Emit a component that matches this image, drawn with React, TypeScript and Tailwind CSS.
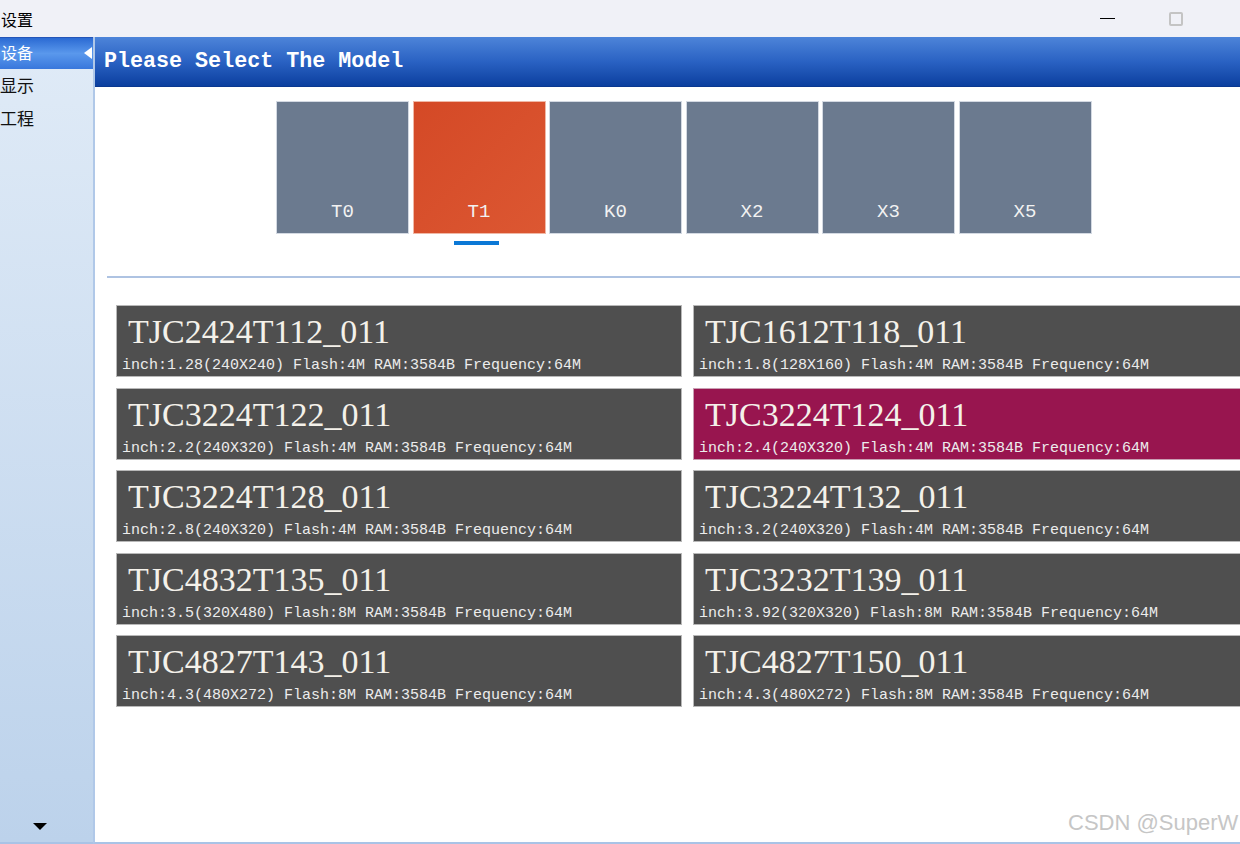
const TILES = ["T0", "T1", "K0", "X2", "X3", "X5"];

type Model = { name: string; spec: string };

const MODELS: Model[] = [
  { name: "TJC2424T112_011", spec: "inch:1.28(240X240) Flash:4M RAM:3584B Frequency:64M" },
  { name: "TJC1612T118_011", spec: "inch:1.8(128X160) Flash:4M RAM:3584B Frequency:64M" },
  { name: "TJC3224T122_011", spec: "inch:2.2(240X320) Flash:4M RAM:3584B Frequency:64M" },
  { name: "TJC3224T124_011", spec: "inch:2.4(240X320) Flash:4M RAM:3584B Frequency:64M" },
  { name: "TJC3224T128_011", spec: "inch:2.8(240X320) Flash:4M RAM:3584B Frequency:64M" },
  { name: "TJC3224T132_011", spec: "inch:3.2(240X320) Flash:4M RAM:3584B Frequency:64M" },
  { name: "TJC4832T135_011", spec: "inch:3.5(320X480) Flash:8M RAM:3584B Frequency:64M" },
  { name: "TJC3232T139_011", spec: "inch:3.92(320X320) Flash:8M RAM:3584B Frequency:64M" },
  { name: "TJC4827T143_011", spec: "inch:4.3(480X272) Flash:8M RAM:3584B Frequency:64M" },
  { name: "TJC4827T150_011", spec: "inch:4.3(480X272) Flash:8M RAM:3584B Frequency:64M" },
];

const SELECTED_TILE = "T1";
const SELECTED_MODEL = "TJC3224T124_011";

export default function App() {
  return (
    <div className="relative w-[1240px] h-[844px] overflow-hidden bg-[#f0f1f7] font-['Noto_Sans_CJK_SC',sans-serif]">
      {/* Title bar */}
      <div className="h-[37px] flex items-center bg-[#f0f1f7]">
        <span className="ml-[1px] text-[16px] leading-none text-black">设置</span>
        <div className="flex-1" />
        <div className="w-[15px] h-px bg-black mr-[54px]" />
        <div className="w-[14px] h-[14px] border-2 border-[#c4c4c4] rounded-[2px] mr-[57px]" />
      </div>

      <div className="flex h-[807px]">
        {/* Sidebar */}
        <div className="relative w-[93px] shrink-0 flex flex-col bg-gradient-to-b from-[#e0ebf7] to-[#bcd2eb] border-b-2 border-[#a9c3e6]">
          <div className="relative h-[32px] flex items-center pb-[4px] bg-gradient-to-b from-[#2b6ad3] via-[#5a98ec] to-[#3877dc] border-t border-[#2455b8]">
            <span className="ml-[1px] text-[16px] leading-none text-white">设备</span>
            <div className="absolute right-[1px] top-[9px] w-0 h-0 border-y-[6px] border-y-transparent border-r-[8px] border-r-white" />
          </div>
          <div className="h-[33px] flex items-center pb-[2px]">
            <span className="text-[17px] leading-none text-[#111]">显示</span>
          </div>
          <div className="h-[33px] flex items-center pb-[2px]">
            <span className="text-[17px] leading-none text-[#111]">工程</span>
          </div>
          <div className="flex-1" />
          <div className="flex justify-center mb-[12px] pr-[14px]">
            <div className="w-0 h-0 border-x-[7px] border-x-transparent border-t-[7px] border-t-black" />
          </div>
        </div>

        {/* Content */}
        <div className="flex-1 min-w-0 flex flex-col bg-white border-l-2 border-[#b0c8e8] border-b-2 border-b-[#a9c3e6] overflow-hidden">
          <div className="h-[50px] shrink-0 flex items-center pl-[9px] -ml-[2px] bg-gradient-to-b from-[#4d84d9] via-[#2a62c3] to-[#0b3f9f] border-l-2 border-[#1d4fae] border-b border-b-[#0a3890]">
            <span className="font-['Liberation_Mono',monospace] font-bold text-[21.7px] leading-none text-white">
              Please Select The Model
            </span>
          </div>

          <div className="flex-1 flex flex-col">
            {/* Series tiles */}
            <div className="flex gap-[3.5px] ml-[181px] mt-[14px]">
              {TILES.map((t) => (
                <div
                  key={t}
                  className={`w-[133px] h-[133px] flex items-end justify-center pb-[11px] border ${
                    t === SELECTED_TILE
                      ? "bg-gradient-to-br from-[#d44926] to-[#dc5732] border-[#f0b8a6]"
                      : "bg-[#6b7a8f] border-[#d3d9e2]"
                  }`}
                >
                  <span className="font-['Liberation_Mono',monospace] text-[19px] leading-none text-[#f2f2f2]">{t}</span>
                </div>
              ))}
            </div>
            <div className="ml-[359px] mt-[7px] w-[45px] h-[4px] bg-[#0b78d6]" />

            <div className="ml-[12px] mt-[31px] h-[2px] bg-[#aec3e2]" />

            {/* Model cards */}
            <div className="grid grid-cols-[566px_566px] gap-x-[11px] gap-y-[10.5px] ml-[21px] mt-[27px]">
              {MODELS.map((m) => (
                <div
                  key={m.name}
                  className={`h-[72px] pl-[5px] border ${
                    m.name === SELECTED_MODEL ? "bg-[#98154f] border-[#c9a0b4]" : "bg-[#4f4f4f] border-[#b8b8b8]"
                  }`}
                >
                  <div className="ml-[6px] mt-[9px] font-['Liberation_Serif',serif] text-[34px] leading-[34px] text-[#f4f1ea] whitespace-nowrap">
                    {m.name}
                  </div>
                  <div className="mt-[9px] font-['Liberation_Mono',monospace] text-[15px] leading-[15px] text-[#ececec] whitespace-nowrap">
                    {m.spec}
                  </div>
                </div>
              ))}
            </div>
          </div>
        </div>
      </div>

      {/* Watermark */}
      <div className="absolute left-[1068px] top-[812px] font-['Liberation_Sans',sans-serif] text-[22px] leading-none text-[#c6c6c6] whitespace-nowrap">
        CSDN @SuperW
      </div>
    </div>
  );
}
